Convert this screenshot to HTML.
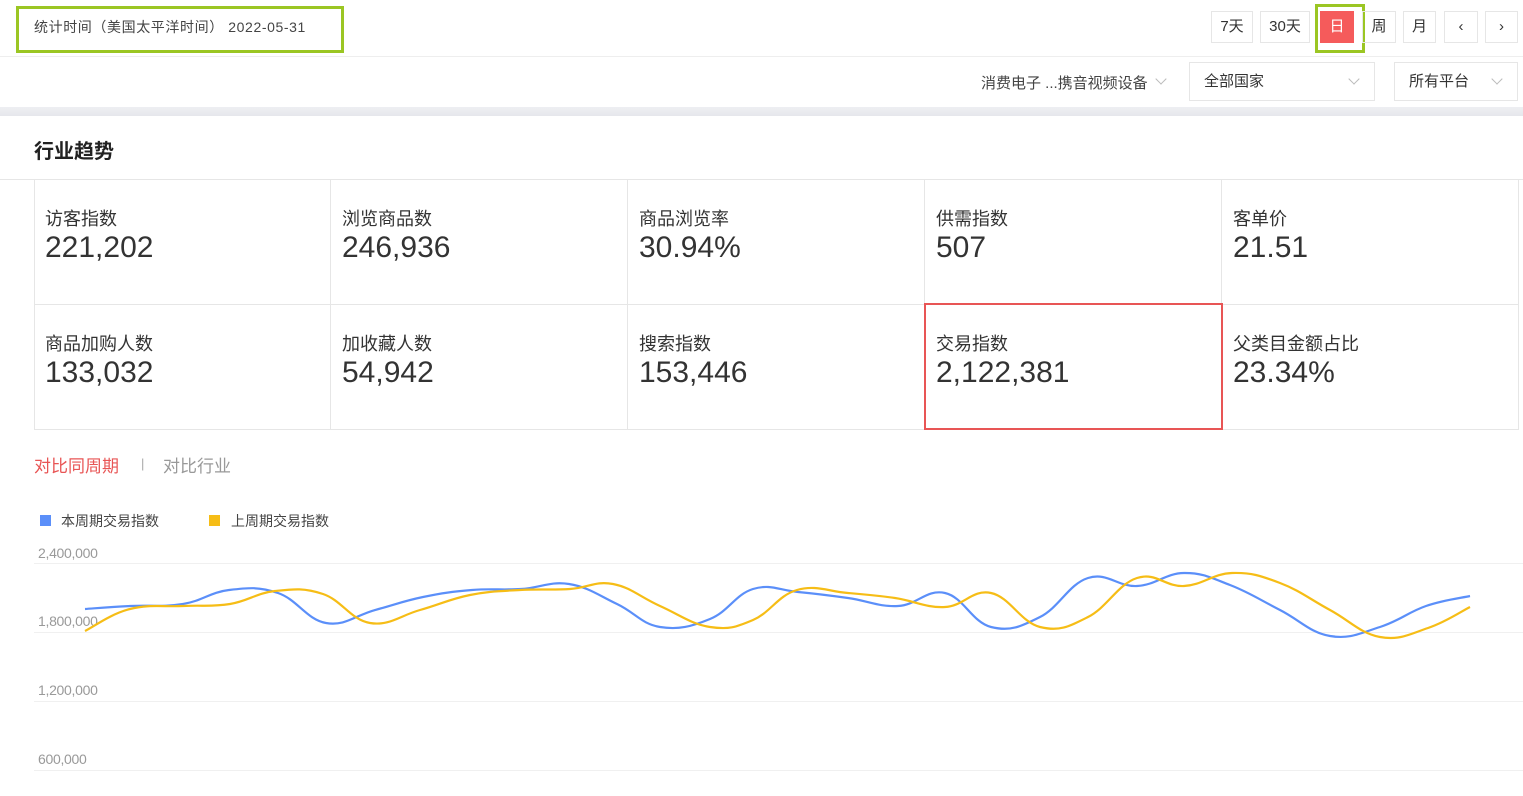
<!DOCTYPE html>
<html><head><meta charset="utf-8"><style>
*{margin:0;padding:0;box-sizing:border-box}
body{width:1523px;height:796px;overflow:hidden;background:#fff;font-family:"Liberation Sans","Noto Sans CJK SC",sans-serif;color:#333;position:relative}
.a{position:absolute}
.btn{position:absolute;top:11px;height:32px;border:1px solid #e6e6e6;font-size:15px;line-height:30px;text-align:center;color:#333}
.dd{position:absolute;top:62px;height:39px;border:1px solid #e6e6e6;font-size:15px;line-height:37px;padding-left:14px;color:#333}
.chev{position:absolute;width:8px;height:8px;border-right:1px solid #bbb;border-bottom:1px solid #bbb;transform:rotate(45deg)}
.cell{position:absolute;width:297px;height:125px;border-right:1px solid #e6e6e6;border-bottom:1px solid #e6e6e6;padding:28px 0 0 11px}
.cell .l{font-size:18px;color:#333;line-height:22px}
.cell .v{font-size:30px;color:#333;line-height:32px;margin-top:2px}
.yl{position:absolute;left:38px;font-size:14px;color:#999;letter-spacing:-0.3px}
.gl{position:absolute;left:34px;width:1489px;height:1px;background:#f0f0f0}
</style></head><body>
<div class="a" style="left:16px;top:6px;width:328px;height:47px;border:3px solid #9bc623"></div>
<div class="a" style="left:34px;top:17px;font-size:14px;color:#444;letter-spacing:0.6px">统计时间（美国太平洋时间） 2022-05-31</div>
<div class="btn" style="left:1211px;width:42px">7天</div>
<div class="btn" style="left:1260px;width:50px">30天</div>
<div class="a" style="left:1315px;top:4px;width:50px;height:49px;border:3px solid #9bc623"></div>
<div class="btn" style="left:1320px;width:34px;background:#f55b5b;border-color:#f55b5b;color:#fff">日</div>
<div class="btn" style="left:1362px;width:34px">周</div>
<div class="btn" style="left:1403px;width:33px">月</div>
<div class="btn" style="left:1444px;width:34px">‹</div>
<div class="btn" style="left:1485px;width:33px">›</div>
<div class="a" style="left:0;top:56px;width:1523px;height:1px;background:#eee"></div>
<div class="a" style="left:981px;top:72px;font-size:15px;color:#444">消费电子 ...携音视频设备</div>
<div class="chev" style="left:1157px;top:75px"></div>
<div class="dd" style="left:1189px;width:186px">全部国家<div class="chev" style="left:160px;top:12px"></div></div>
<div class="dd" style="left:1394px;width:124px">所有平台<div class="chev" style="left:98px;top:12px"></div></div>
<div class="a" style="left:0;top:107px;width:1523px;height:9px;background:linear-gradient(#eeeff2,#e6e7ec)"></div>
<div class="a" style="left:34px;top:135px;font-size:20px;font-weight:bold;color:#222">行业趋势</div>
<div class="a" style="left:0;top:179px;width:1523px;height:1px;background:#e6e6e6"></div>
<div class="a" style="left:34px;top:180px;width:1px;height:249px;background:#e6e6e6"></div>
<div class="cell" style="left:34px;top:180px"><div class="l">访客指数</div><div class="v">221,202</div></div>
<div class="cell" style="left:331px;top:180px"><div class="l">浏览商品数</div><div class="v">246,936</div></div>
<div class="cell" style="left:628px;top:180px"><div class="l">商品浏览率</div><div class="v">30.94%</div></div>
<div class="cell" style="left:925px;top:180px"><div class="l">供需指数</div><div class="v">507</div></div>
<div class="cell" style="left:1222px;top:180px"><div class="l">客单价</div><div class="v">21.51</div></div>
<div class="cell" style="left:34px;top:305px"><div class="l">商品加购人数</div><div class="v">133,032</div></div>
<div class="cell" style="left:331px;top:305px"><div class="l">加收藏人数</div><div class="v">54,942</div></div>
<div class="cell" style="left:628px;top:305px"><div class="l">搜索指数</div><div class="v">153,446</div></div>
<div class="cell" style="left:925px;top:305px"><div class="l">交易指数</div><div class="v">2,122,381</div></div>
<div class="cell" style="left:1222px;top:305px"><div class="l">父类目金额占比</div><div class="v">23.34%</div></div>
<div class="a" style="left:924px;top:303px;width:299px;height:127px;border:2px solid #e85555"></div>
<div class="a" style="left:34px;top:452px;font-size:17px;color:#e85555">对比同周期</div>
<div class="a" style="left:141px;top:456px;font-size:13px;color:#aaa">|</div>
<div class="a" style="left:163px;top:452px;font-size:17px;color:#999">对比行业</div>
<div class="a" style="left:40px;top:515px;width:11px;height:11px;background:#5b8ff9"></div>
<div class="a" style="left:61px;top:511px;font-size:14px;color:#444">本周期交易指数</div>
<div class="a" style="left:209px;top:515px;width:11px;height:11px;background:#f6bd16"></div>
<div class="a" style="left:231px;top:511px;font-size:14px;color:#444">上周期交易指数</div>
<div class="yl" style="top:545px">2,400,000</div><div class="gl" style="top:563px"></div>
<div class="yl" style="top:613px">1,800,000</div><div class="gl" style="top:632px"></div>
<div class="yl" style="top:682px">1,200,000</div><div class="gl" style="top:701px"></div>
<div class="yl" style="top:751px">600,000</div><div class="gl" style="top:770px"></div>
<svg class="a" style="left:0;top:0" width="1523" height="796">
<path id="pb" fill="none" stroke="#5b8ff9" stroke-width="2.2"/>
<path id="py" fill="none" stroke="#f6bd16" stroke-width="2.2"/>
</svg>
<script>
function sm(s){var p=s.split(' ').map(function(t){return t.split(',').map(Number)});var d='M'+p[0][0]+','+p[0][1];
for(var i=0;i<p.length-1;i++){var p0=p[i-1]||p[i],p1=p[i],p2=p[i+1],p3=p[i+2]||p2;var k=0.2;
d+=' C'+(p1[0]+(p2[0]-p0[0])*k)+','+(p1[1]+(p2[1]-p0[1])*k)+' '+(p2[0]-(p3[0]-p1[0])*k)+','+(p2[1]-(p3[1]-p1[1])*k)+' '+p2[0]+','+p2[1];}return d;}
document.getElementById('pb').setAttribute('d',sm("85,609 130,606 183,604 229,590 278,593 326,623 375,610 423,597 472,590 521,589 569,584 617,604 660,627 710,619 753,589 798,592 848,598 898,606 945,593 991,627 1040,617 1088,578 1137,586 1184,573 1230,585 1280,610 1330,636 1380,627 1426,606 1470,596"));
document.getElementById('py').setAttribute('d',sm("85,631 130,609 183,606 230,604 275,591 323,594 370,623 420,610 470,595 520,590 570,589 613,584 660,606 710,627 753,620 797,590 848,593 895,598 945,607 991,593 1040,627 1088,617 1137,578 1184,586 1232,573 1280,583 1330,610 1380,637 1428,628 1470,607"));
</script>
</body></html>
